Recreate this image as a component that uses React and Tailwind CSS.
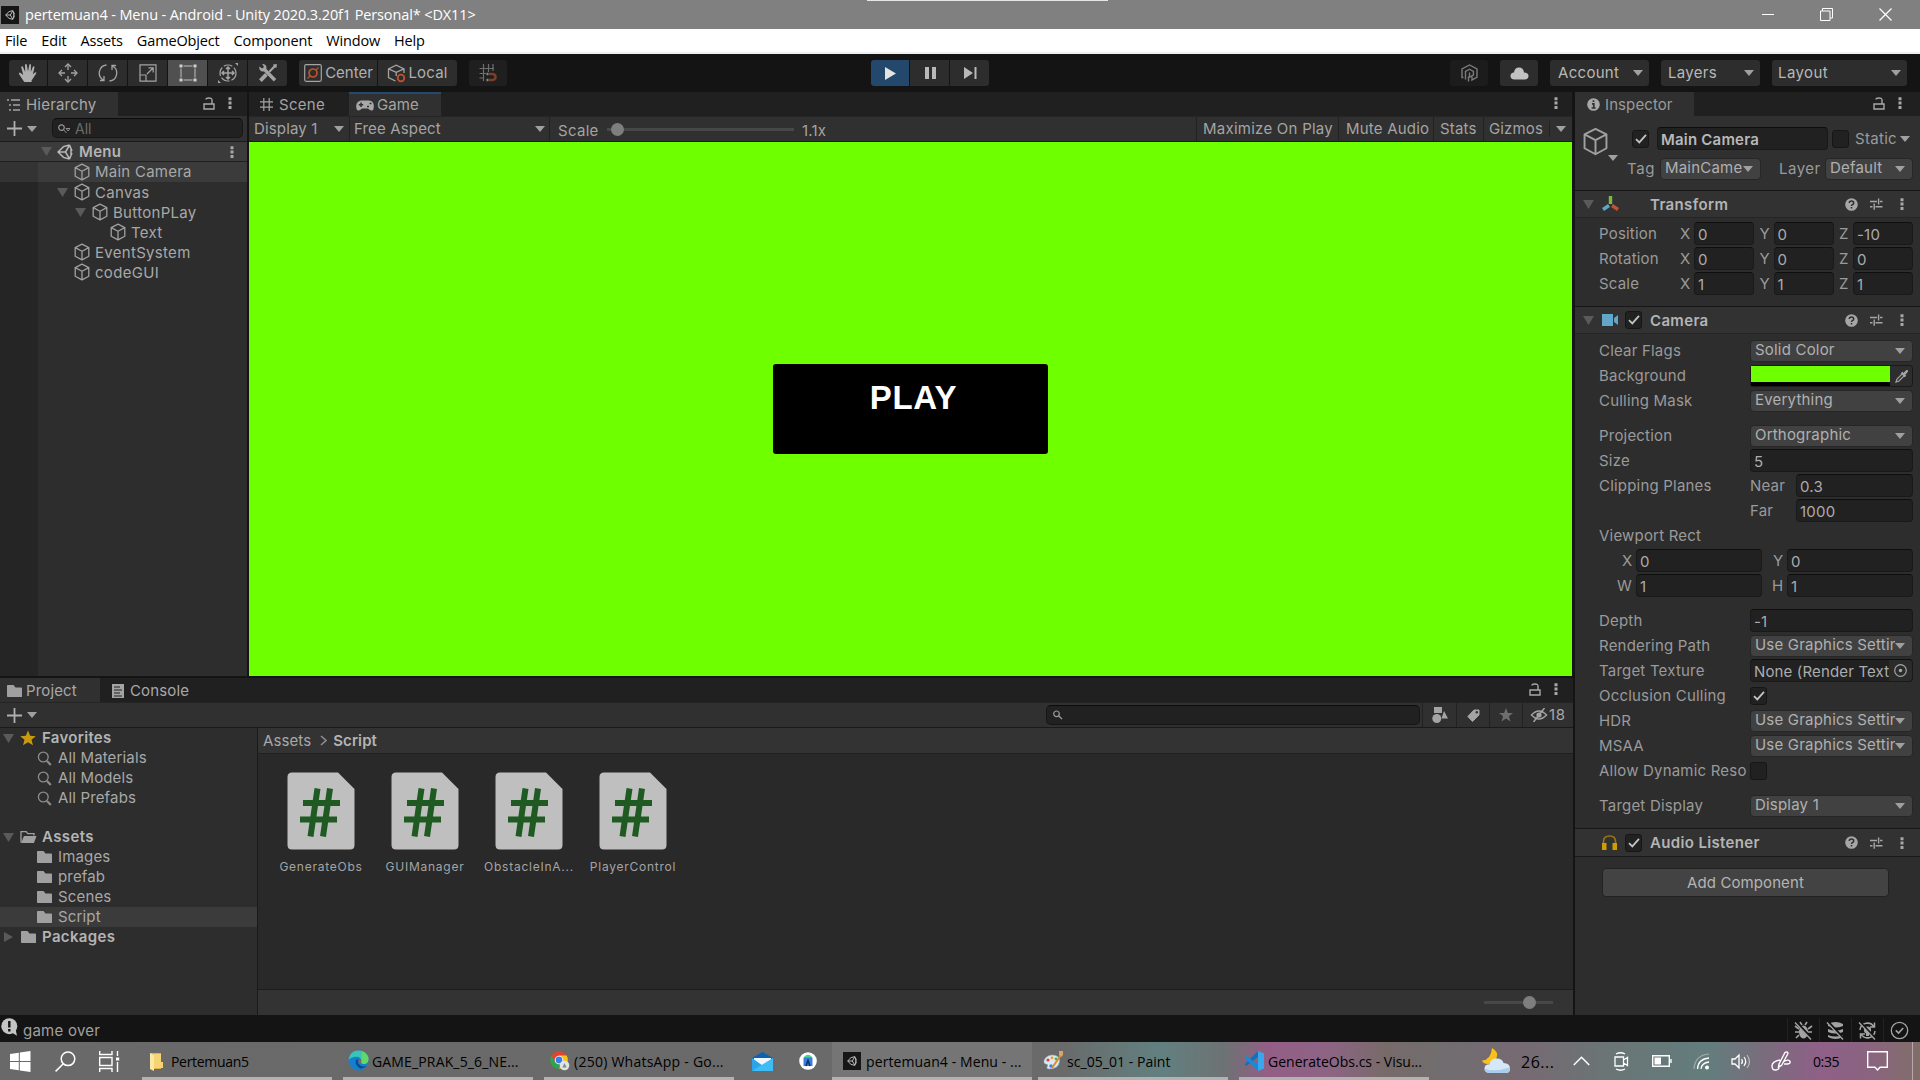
import React from "react";

const UI = "font-['Inter',sans-serif]";
const WIN = "font-['Open_Sans','Noto_Sans',sans-serif]";

/* ---------- small glyphs ---------- */
const Svg = ({ w = 16, h, vb, className = "", children }) => (
  <svg width={w} height={h || w} viewBox={vb || `0 0 ${w} ${h || w}`} fill="none" className={`block shrink-0 ${className}`}>
    {children}
  </svg>
);
const Down = ({ className = "", c = "#a0a0a0" }) => (
  <Svg w={10} h={6} className={className}><path d="M0 0H10L5 6Z" fill={c} /></Svg>
);
const Fold = ({ className = "" }) => (
  <Svg w={11} h={9} className={className}><path d="M0 0H11L5.5 9Z" fill="#5a5a5a" /></Svg>
);
const Dots = ({ className = "" }) => (
  <Svg w={4} h={12} className={className}>
    <path d="M.5.2h3v3h-3zM.5 4.6h3v3h-3zM.5 9h3v3h-3z" fill="#a8a8a8" />
  </Svg>
);
const Lock = ({ className = "" }) => (
  <Svg w={12} h={13} className={className}>
    <path d="M1 7h10v5H1zM9 7V3q0-2-3-2T3 2.5" stroke="#a8a8a8" strokeWidth="1.4" />
  </Svg>
);
const Cube = ({ s = 18, sw = 1.3, className = "", c = "#a0a0a0" }) => (
  <Svg w={s} vb="0 0 18 18" className={className}>
    <path d="M9 1.2 15.8 4.6V13.2L9 16.9 2.2 13.2V4.6ZM2.2 4.6 9 8.2 15.8 4.6M9 8.2V16.9" stroke={c} strokeWidth={sw} strokeLinejoin="round" />
  </Svg>
);
const Plus = () => (
  <Svg w={15} className=""><path d="M7.5 0V15M0 7.5H15" stroke="#b0b0b0" strokeWidth="1.8" /></Svg>
);
const Folder = () => (
  <Svg w={15} h={14}><path d="M0 1.5Q0 1 .8 1H6.5L8.5 3.4H14.2Q15 3.4 15 4.2V12.4Q15 13 14.2 13H.8Q0 13 0 12.2Z" fill="#a0a0a0" /></Svg>
);
const FolderOpen = () => (
  <Svg w={17} h={14}>
    <path d="M1 12.5V1.6H6.2L7.8 3.6H14V5.5" stroke="#a0a0a0" strokeWidth="1.3" />
    <path d="M4 6H16.5L14 13H1Z" fill="#a0a0a0" />
  </Svg>
);
const Mag = () => (
  <Svg w={15}><circle cx="6.3" cy="6" r="4.9" stroke="#8c8c8c" strokeWidth="1.3" /><path d="M10 10 13.8 14" stroke="#8c8c8c" strokeWidth="2.2" /></Svg>
);
const Check = () => (
  <Svg w={12} h={10}><path d="M1 5.2 4.3 8.4 11 .9" stroke="#c4c4c4" strokeWidth="1.8" /></Svg>
);
const UnityMark = ({ s = 16, c = "#b8b8b8" }) => (
  <Svg w={s} vb="0 0 16 16">
    <path d="M12.5 1 6.5 2.6 1 8l5.5 5.4 6 1.6M12.5 1 15 7M12.5 15 15 9M1.2 8H8.5M8.5 8 12.5 1.4M8.5 8 12.5 14.6M14 4v8" stroke={c} strokeWidth="1.5" />
  </Svg>
);
const Help = () => (
  <Svg w={13}>
    <circle cx="6.5" cy="6.5" r="6.3" fill="#a6a6a6" />
    <path d="M4.3 5Q4.3 3 6.5 3T8.7 4.9Q8.7 6 7.4 6.6 6.5 7 6.5 8M6.5 9V10.4" stroke="#2f2f2f" strokeWidth="1.5" />
  </Svg>
);
const Sliders = () => (
  <Svg w={13} h={12}>
    <path d="M0 3.5H7M10 3.5H12.5M8.6 .5V6.5M0 8.8H2.5M5.5 8.8H12.5M4.2 5.5V11.8" stroke="#a6a6a6" strokeWidth="1.4" />
  </Svg>
);
const UnityApp = () => (
  <div className="flex h-[18px] w-[18px] shrink-0 items-center justify-center bg-[#161616]">
    <UnityMark s={10} c="#c8c8c8" />
  </div>
);

/* ---------- building blocks ---------- */
const Field = ({ className = "", children }) => (
  <div className={`flex h-[23px] shrink-0 items-center overflow-hidden whitespace-nowrap rounded-[4px] border border-[#191919] border-t-[#0e0e0e] bg-[#212121] pl-[3px] pt-[2px] text-[#acacac] ${className}`}>
    {children}
  </div>
);
const Select = ({ className = "", children }) => (
  <div className={`flex h-[22px] shrink-0 items-center justify-between overflow-hidden rounded-[4px] border border-[#262626] bg-[#414141] pl-[4px] pr-[7px] text-[#b0b0b0] ${className}`}>
    <span className="min-w-0 flex-1 overflow-hidden whitespace-nowrap pb-[2px]">{children}</span>
    <Down />
  </div>
);
const Box = ({ on, className = "" }) => (
  <div className={`flex h-[18px] w-[17px] shrink-0 items-center justify-center rounded-[3px] border border-[#161616] bg-[#212121] ${className}`}>
    {on && <Check />}
  </div>
);
const Row = ({ label, className = "", children }) => (
  <div className={`flex h-[25px] items-center pl-[24px] ${className}`}>
    <div className="w-[151px] shrink-0 overflow-hidden whitespace-nowrap">{label}</div>
    {children}
  </div>
);
const Axis = ({ label, w = "w-[60px]", lw = "w-[14px]", children }) => (
  <div className="flex items-center">
    <span className={`shrink-0 ${lw}`}>{label}</span>
    <Field className={w}>{children}</Field>
  </div>
);
const Vec = ({ label, v }) => (
  <div className="flex h-[25px] items-center pl-[24px]">
    <div className="w-[81px]">{label}</div>
    <div className="flex gap-[5.5px]">
      <Axis label="X">{v[0]}</Axis>
      <Axis label="Y">{v[1]}</Axis>
      <Axis label="Z">{v[2]}</Axis>
    </div>
  </div>
);
const CompHead = ({ fold, icon, check, title, className = "" }) => (
  <div className={`flex h-[28px] items-center border-y border-t-[#171717] border-b-[#252525] bg-[#323232] ${className}`}>
    <div className="w-[27px] pl-[8px]">{fold && <Fold />}</div>
    <div className="flex w-[23px] items-center">{icon}</div>
    <div className="w-[25px]">{check && <Box on />}</div>
    <div className="flex-1 pt-[1px] font-semibold tracking-[0.35px] text-[#b4b4b4]">{title}</div>
    <Help /><div className="w-[12px]" /><Sliders /><Dots className="ml-[17px] mr-[16px]" />
  </div>
);

/* ---------- window chrome ---------- */
const TitleBar = () => (
  <div className={`flex h-[29px] items-center bg-[#808080] pl-[1px] text-white ${WIN}`}>
    <UnityApp />
    <span className="ml-[6px] w-[842px] whitespace-nowrap text-[14.5px] tracking-[-0.12px]">pertemuan4 - Menu - Android - Unity 2020.3.20f1 Personal* &lt;DX11&gt;</span>
    <div className="mb-[28px] h-[1px] w-[241px] bg-[#e6e6e6]" />
    <div className="ml-auto flex items-center pr-[28px]">
      <div className="mr-[46px] h-[1px] w-[12px] bg-white" />
      <Svg w={13} className="mr-[46px]"><path d="M.5 3H10V12.5H.5ZM2.5 3V.5H12.5V10H10" stroke="#fff" /></Svg>
      <Svg w={13}><path d="M.5 .5 12.5 12.5M12.5 .5 .5 12.5" stroke="#fff" strokeWidth="1.2" /></Svg>
    </div>
  </div>
);
const MenuBar = () => (
  <div className={`flex h-[25px] items-center gap-[14px] border-b-2 border-[#f0f0f0] bg-white pt-[1px] pl-[5px] text-[14.5px] tracking-[-0.15px] text-black ${WIN}`}>
    {["File", "Edit", "Assets", "GameObject", "Component", "Window", "Help"].map((m) => <span key={m}>{m}</span>)}
  </div>
);

const TB = ({ className = "", children }) => (
  <div className={`flex h-[26px] shrink-0 items-center justify-center ${className}`}>{children}</div>
);
const g = "#a4a4a4";
const Toolbar = () => (
  <div className="flex h-[38px] items-center bg-[#141414] pl-[9px] text-[15px] text-[#b0b0b0]">
    <div className="flex gap-[1px]">
      <TB className="w-[38px] rounded-l-[3px] bg-[#2d2d2d]">
        <Svg w={20} h={20}><path d="M5.2 17.5 1 11q-.5-1.5 1-1.6L5.2 12 3.2 4.2q0-1.3 1.5-1L7.2 9 7 1.8Q7.6.2 8.8 1.6L10 8.6 11.4 1.6Q12.6.4 13 2L12.8 9 15 3.6Q16.4 2.8 16.5 4.4L14.8 11.2 17 9.4Q18.8 9 18.2 10.4L13.6 17.4V19H6.4Z" fill="#b0b0b0" /></Svg>
      </TB>
      <TB className="w-[39px] bg-[#2d2d2d]">
        <Svg w={20}><path d="M10 1V7M10 13V19M1 10H7M13 10H19" stroke={g} strokeWidth="1.3" /><path d="M7 4 10 1 13 4M7 16 10 19 13 16M4 7 1 10 4 13M16 7 19 10 16 13" stroke={g} strokeWidth="1.3" /></Svg>
      </TB>
      <TB className="w-[39px] bg-[#2d2d2d]">
        <Svg w={20}><path d="M8.5 2A8 8 0 0 0 5.5 17M11.5 18A8 8 0 0 0 14.5 3M2 17.5H6V13M18 2.5H14V7" stroke={g} strokeWidth="1.3" /></Svg>
      </TB>
      <TB className="w-[39px] bg-[#2d2d2d]">
        <Svg w={18}><path d="M1 .8H17V17.2H1ZM1 11H7V17M8 10 14 4M9.5 3.8H14.2V8.5" stroke={g} strokeWidth="1.2" /></Svg>
      </TB>
      <TB className="w-[39px] bg-[#505050]">
        <Svg w={18}><path d="M4.5 2H13.5M4.5 16H13.5M2 4.5V13.5M16 4.5V13.5" stroke="#c0c0c0" /><path d="M.5.5h3v3h-3zM14.5.5h3v3h-3zM.5 14.5h3v3h-3zM14.5 14.5h3v3h-3z" fill="#d0d0d0" /></Svg>
      </TB>
      <TB className="w-[39px] bg-[#2d2d2d]">
        <Svg w={20}><circle cx="10" cy="10" r="8" stroke={g} strokeWidth="1.2" strokeDasharray="9 2" /><path d="M10 4V16M4 10H16M8 6 10 4 12 6M8 14 10 16 12 14M6 8 4 10 6 12M14 8 16 10 14 12" stroke={g} strokeWidth="1.5" /><path d="M17 0H20V3ZM0 17V20H3Z" fill={g} /></Svg>
      </TB>
      <TB className="w-[39px] rounded-r-[3px] bg-[#2d2d2d]">
        <Svg w={20}>
          <path d="M6 6 17 17.2" stroke={g} strokeWidth="3.4" />
          <path d="M1.2 3.4 4.2 5.6 6 4 4.2 1Q7.4.4 8.4 3.4 8.8 5.6 7.6 7.4 5.6 9 3.4 8.2 1 7 1.2 3.4Z" fill={g} />
          <path d="M2.4 17.6 8.4 11.4" stroke={g} strokeWidth="3.8" />
          <path d="M10.4 8.2 15.6 2.8 15 1.4 18.8 1 18.6 4.8 17 4.4 11.8 9.8Z" fill={g} />
        </Svg>
      </TB>
    </div>
    <div className="ml-[12px] flex gap-[1px]">
      <TB className="w-[78px] gap-[3px] rounded-l-[3px] bg-[#2d2d2d] pl-[1px]">
        <Svg w={18}><rect x=".7" y=".7" width="16.6" height="16.6" rx="1.5" stroke={g} strokeWidth="1.2" /><path d="M3.5 14.5 6 12M12 6 14.5 3.5" stroke="#c0532f" strokeWidth="1.2" /><circle cx="9" cy="9" r="4" stroke="#c0532f" strokeWidth="1.7" /></Svg>
        Center
      </TB>
      <TB className="w-[79px] gap-[2px] rounded-r-[3px] bg-[#2d2d2d] tracking-[0.2px]">
        <Svg w={19} h={19}><path d="M8.5 17 1.5 13.5V4.8L9.2 1.2 17 4.8V9M1.5 4.8 9.2 8.4 17 4.8M9.2 8.4V12" stroke={g} strokeWidth="1.3" /><circle cx="14" cy="14" r="3.3" stroke="#c0532f" strokeWidth="1.8" /></Svg>
        Local
      </TB>
    </div>
    <TB className="ml-[12px] w-[38px] rounded-[3px] bg-[#1f1f1f]">
      <Svg w={18} h={18}><path d="M4.5 0V17M9.5 0V8M14 0V7M.5 4.5H15M.5 9.5H7M.5 14H5" stroke="#6e6e6e" strokeWidth="1.2" /><path d="M10 10H13.5Q16.5 10.4 16.5 13T13.5 16H10" stroke="#7d3d28" strokeWidth="2.6" /><path d="M7.5 10h2M7.5 16h2" stroke="#888" strokeWidth="2.4" /></Svg>
    </TB>
    <div className="ml-[364px] flex gap-[1px]">
      <TB className="w-[38px] rounded-l-[3px] bg-[#24486b]"><Svg w={11} h={13}><path d="M0 0 11 6.5 0 13Z" fill="#e4e4e4" /></Svg></TB>
      <TB className="w-[39px] bg-[#2d2d2d] pl-[1px]"><Svg w={11} h={12}><path d="M0 0h4v12H0zM7 0h4v12H7z" fill="#b8b8b8" /></Svg></TB>
      <TB className="w-[39px] rounded-r-[3px] bg-[#2d2d2d] pl-[1px]"><Svg w={13} h={12}><path d="M0 0 9 6 0 12ZM10.5 0h2v12h-2z" fill="#b8b8b8" /></Svg></TB>
    </div>
    <div className="ml-auto flex gap-[12px] pr-[13px] text-[#b8b8b8]">
      <TB className="w-[38px] rounded-[3px] bg-[#1c1c1c]">
        <Svg w={17} h={18}><path d="M2.5 13.5H1V5L8.5 1 16 5V13L11 16V12.8M4.5 15.5V7.5L8.5 5.2 12.4 7.5V11L8.5 13V8.5M7.5 17.5V12.5" stroke="#7c7c7c" strokeWidth="1.4" /></Svg>
      </TB>
      <TB className="w-[38px] rounded-[3px] bg-[#2d2d2d] pl-[1px]">
        <Svg w={19} h={13}><path d="M4.5 12.5Q.5 12.2.5 9T4 5.6Q4.6.5 9 .5T14 5.5Q18.5 5.6 18.5 9T14.5 12.5Z" fill="#c2c2c2" /></Svg>
      </TB>
      <TB className="w-[99px] rounded-[3px] bg-[#2d2d2d] !justify-between pl-[8px] pr-[6px]"><span className="tracking-[0.3px]">Account</span><Down /></TB>
      <TB className="w-[99px] rounded-[3px] bg-[#2d2d2d] !justify-between pl-[7px] pr-[6px]"><span className="tracking-[0.3px]">Layers</span><Down /></TB>
      <TB className="w-[135px] rounded-[3px] bg-[#2d2d2d] !justify-between pl-[6px] pr-[6px]"><span className="tracking-[0.4px]">Layout</span><Down /></TB>
    </div>
  </div>
);

/* ---------- hierarchy ---------- */
const Node = ({ pad, fold, name }) => (
  <div className="flex h-[20px]">
    <div className="w-[38px] shrink-0 bg-[#252525]" />
    <div className={`flex items-center ${pad}`}>
      <div className="w-[17px] pl-[1px]">{fold && <Fold />}</div>
      <Cube /><span className="ml-[4px] pt-[1px]">{name}</span>
    </div>
  </div>
);
const Hierarchy = () => (
  <div className="flex w-[247px] shrink-0 flex-col bg-[#2d2d2d] text-[#a8a8a8]">
    <div className="flex h-[24px] bg-[#202020]">
      <div className="flex w-[118px] items-center bg-[#303030] pl-[7px] pt-[1px]">
        <Svg w={13} h={12}><path d="M0 1h2M4 1h9M2 6h2M6 6h7M2 11h2M6 11h7" stroke={g} strokeWidth="1.5" /></Svg>
        <span className="ml-[6px] tracking-[0.2px]">Hierarchy</span>
      </div>
      <Lock className="ml-[85px] mt-[5px]" /><Dots className="ml-[13px] mt-[5px]" />
    </div>
    <div className="flex h-[26px] items-center border-b border-[#1a1a1a] bg-[#303030] pl-[7px]">
      <Plus /><Down className="ml-[5px]" />
      <div className="ml-[15px] mb-[1px] flex h-[20px] w-[191px] items-center rounded-[5px] border border-[#161616] border-t-[#0c0c0c] bg-[#212121] pl-[5px] pt-[1px] text-[14px] text-[#6c6c6c]">
        <Svg w={12} h={10}><circle cx="3.5" cy="3.6" r="2.8" stroke="#9a9a9a" strokeWidth="1.2" /><path d="M5.5 5.6 8.5 9M8 4.5h4l-2 2.5z" stroke="#9a9a9a" strokeWidth=".9" /></Svg>
        <span className="ml-[5px]">All</span>
      </div>
    </div>
    <div className="flex h-[20px] items-center border-b border-[#202020] bg-[#3b3b3b] pl-[41px]">
      <Fold /><div className="w-[5px]" /><UnityMark />
      <span className="ml-[6px] flex-1 font-semibold tracking-[0.3px] text-[#b4b4b4]">Menu</span>
      <Dots className="mr-[13px]" />
    </div>
    <div className="flex h-[20px] items-center bg-[#3b3b3b]">
      <div className="h-full w-[38px] bg-[#333333]" />
      <Cube className="ml-[35px]" /><span className="ml-[4px] tracking-[0.25px]">Main Camera</span>
    </div>
    <div className="tracking-[0.3px]">
      <Node pad="pl-[18px]" fold name="Canvas" />
      <Node pad="pl-[36px]" fold name="ButtonPLay" />
      <Node pad="pl-[54px]" name="Text" />
      <Node pad="pl-[18px]" name="EventSystem" />
      <Node pad="pl-[18px]" name="codeGUI" />
    </div>
    <div className="w-[38px] flex-1 bg-[#252525]" />
  </div>
);

/* ---------- game view ---------- */
const Sep = ({ className = "" }) => <div className={`h-full w-[1px] shrink-0 bg-[#222] ${className}`} />;
const GameView = () => (
  <div className="ml-[2px] flex w-[1323px] shrink-0 flex-col bg-[#202020] text-[#a4a4a4]">
    <div className="flex h-[24px]">
      <div className="flex w-[100px] items-center pl-[11px] pt-[1px]">
        <Svg w={13}><path d="M3.8 0V13M9.2 0V13M0 3.8H13M0 9.2H13" stroke={g} strokeWidth="1.2" /></Svg>
        <span className="ml-[6px] tracking-[0.3px]">Scene</span>
      </div>
      <div className="flex w-[92px] items-center border-t-2 border-[#264a6c] bg-[#303030] pl-[7px]">
        <Svg w={18} h={11}><path d="M5 .5H13Q17.8.8 17.8 6T15.5 10.5Q14 10.5 12 8.5H6Q4 10.5 2.5 10.5 .2 10.5.2 6T5 .5Z" fill="#a8a8a8" /><path d="M5 2.5V7M2.8 4.8H7.2M11 6.5h2M13.5 3.6h2" stroke="#303030" strokeWidth="1.5" /></Svg>
        <span className="ml-[3px] tracking-[0.1px]">Game</span>
      </div>
      <Dots className="ml-auto mr-[14px] mt-[5px]" />
    </div>
    <div className="flex h-[26px] items-center border-b border-t border-b-[#1a1a1a] border-t-[#262626] bg-[#303030] tracking-[0.15px]">
      <div className="flex w-[100px] items-center justify-between pl-[5px] pr-[5px]">Display 1<Down /></div><Sep />
      <div className="flex w-[199px] items-center justify-between pl-[4px] pr-[4px]">Free Aspect<Down /></div><Sep />
      <span className="ml-[8px] mt-[3px] w-[49px] tracking-[0.3px]">Scale</span>
      <div className="mt-[1px] flex h-[3px] w-[187px] items-center bg-[#484848]"><div className="ml-[4px] h-[13px] w-[13px] rounded-full bg-[#7e7e7e]" /></div>
      <span className="ml-[8px] mt-[3px]">1.1x</span>
      <div className="ml-auto flex h-full items-center">
        <Sep /><span className="w-[141px] pl-[6px] tracking-[0.25px]">Maximize On Play</span>
        <Sep /><span className="w-[94px] pl-[7px] tracking-[0.2px]">Mute Audio</span>
        <Sep /><span className="w-[49px] pl-[6px]">Stats</span>
        <Sep /><span className="w-[65px] pl-[5px]">Gizmos</span>
        <div className="h-[16px] w-[1px] bg-[#222]" /><Down className="ml-[6px] mr-[6px]" />
      </div>
    </div>
    <div className="flex flex-1 bg-[#6eff00]">
      <div className="ml-[524px] mt-[222px] flex h-[90px] w-[275px] justify-center rounded-[3px] bg-black pl-[6px] pt-[15px] font-['Liberation_Sans',sans-serif] text-[33px] font-bold leading-[37px] tracking-[0.6px] text-white">PLAY</div>
    </div>
  </div>
);

/* ---------- project ---------- */
const TreeRow = ({ icon, name, sel }) => (
  <div className={`flex h-[20px] items-center pl-[37px] tracking-[0.15px] ${sel ? "bg-[#3b3b3b]" : ""}`}>{icon}<span className="ml-[6px]">{name}</span></div>
);
const FileCard = ({ name }) => (
  <div className="flex w-[104px] flex-col items-center">
    <Svg w={68} h={78}>
      <path d="M5 .5H51L67.5 17V73Q67.5 77.5 63 77.5H5Q.5 77.5.5 73V5Q.5.5 5 .5Z" fill="#bfbfbf" />
      <path d="M30.5 16.5 23.5 64.5M43 16.5 36 64.5M16 31H53M13 47.5H50" stroke="#1f5a22" strokeWidth="6" />
    </Svg>
    <span className="mt-[9px] text-[12px] leading-[15px] tracking-[0.75px] text-[#a4a4a4]">{name}</span>
  </div>
);
const Project = () => (
  <div className="flex h-[337px] flex-col bg-[#2d2d2d] text-[#a8a8a8]">
    <div className="flex h-[24px] bg-[#202020] tracking-[0.15px]">
      <div className="flex w-[100px] items-center bg-[#303030] pl-[7px] pt-[1px]"><Folder /><span className="ml-[4px]">Project</span></div>
      <div className="flex items-center pl-[12px] pt-[1px]">
        <Svg w={12} h={14}><path d="M0 0h12v14H0z" fill={g} /><path d="M2 3h6M2 6h8M2 9h6M2 12h8" stroke="#202020" strokeWidth="1.2" /></Svg>
        <span className="ml-[6px]">Console</span>
      </div>
      <Lock className="ml-auto mt-[5px]" /><Dots className="ml-[13px] mr-[15px] mt-[5px]" />
    </div>
    <div className="flex h-[26px] items-center border-b border-t border-b-[#1a1a1a] border-t-[#242424] bg-[#303030] pl-[7px]">
      <Plus /><Down className="ml-[5px]" />
      <div className="ml-auto mb-[1px] flex h-[20px] w-[374px] items-center rounded-[5px] border border-[#161616] border-t-[#0c0c0c] bg-[#212121] pl-[6px]">
        <Svg w={10}><circle cx="3.5" cy="3.8" r="2.8" stroke="#9a9a9a" strokeWidth="1.2" /><path d="M5.5 5.8 9 9" stroke="#9a9a9a" strokeWidth="1.4" /></Svg>
      </div>
      <Sep className="ml-[2px]" />
      <div className="flex w-[33px] justify-center"><Svg w={16} h={17}><path d="M2 0h8v6H2z" fill={g} /><circle cx="4.8" cy="11.5" r="4.5" fill={g} /><path d="M12 4 16 11.5H9.5Z" fill={g} /></Svg></div>
      <Sep />
      <div className="flex w-[32px] justify-center"><Svg w={13}><path d="M7 1H12V6L5.5 12.5 .8 7.5Z" fill={g} stroke={g} strokeLinejoin="round" /><circle cx="9.8" cy="3.3" r="1.2" fill="#303030" /></Svg></div>
      <Sep />
      <div className="flex w-[32px] justify-center"><Svg w={14}><path d="M7 0 8.9 5H14L9.9 8.2 11.5 13.6 7 10.4 2.5 13.6 4.1 8.2 0 5H5.1Z" fill="#6e6e6e" /></Svg></div>
      <Sep />
      <div className="flex w-[50px] items-center pl-[7px]">
        <Svg w={18} h={14} vb="0 0 17 14"><path d="M1 7Q8.5-1 16 7 8.5 15 1 7ZM14 0 3 14" stroke={g} strokeWidth="1.5" /><circle cx="8.5" cy="7" r="2.6" fill={g} /></Svg>
        <span className="ml-[1px] tracking-[0.6px]">18</span>
      </div>
    </div>
    <div className="flex flex-1">
      <div className="w-[257px] shrink-0">
        <div className="flex h-[20px] items-center pl-[3px]"><Fold /><Svg w={16} className="ml-[6px]"><path d="M8 .5 10.2 5.8 15.8 6.2 11.5 9.8 13 15.3 8 12.2 3 15.3 4.5 9.8.2 6.2 5.8 5.8Z" fill="#c99a10" /></Svg><span className="ml-[6px] font-semibold tracking-[0.3px] text-[#b4b4b4]">Favorites</span></div>
        <TreeRow icon={<Mag />} name="All Materials" />
        <TreeRow icon={<Mag />} name="All Models" />
        <TreeRow icon={<Mag />} name="All Prefabs" />
        <div className="mt-[19px] flex h-[20px] items-center pl-[3px]"><Fold /><div className="w-[6px]" /><FolderOpen /><span className="ml-[5px] font-semibold tracking-[0.4px] text-[#b4b4b4]">Assets</span></div>
        <TreeRow icon={<Folder />} name="Images" />
        <TreeRow icon={<Folder />} name="prefab" />
        <TreeRow icon={<Folder />} name="Scenes" />
        <TreeRow icon={<Folder />} name="Script" sel />
        <div className="flex h-[20px] items-center pl-[4px]"><Svg w={9} h={10}><path d="M0 0 9 5 0 10Z" fill="#5a5a5a" /></Svg><div className="w-[8px]" /><Folder /><span className="ml-[6px] font-semibold tracking-[0.35px] text-[#b4b4b4]">Packages</span></div>
      </div>
      <div className="flex flex-1 flex-col border-l border-[#1a1a1a] bg-[#292929]">
        <div className="flex h-[26px] items-center border-b border-[#202020] bg-[#333] pl-[5px] tracking-[0.1px]">
          <span>Assets</span>
          <Svg w={7} h={11} className="ml-[9px] mr-[6px]"><path d="M1 1 6 5.5 1 10" stroke="#8c8c8c" strokeWidth="1.6" /></Svg>
          <span className="font-semibold text-[#b4b4b4]">Script</span>
        </div>
        <div className="flex flex-1 pl-[11px] pt-[18px]">
          {["GenerateObs", "GUIManager", "ObstacleInA...", "PlayerControl"].map((n) => <FileCard key={n} name={n} />)}
        </div>
        <div className="flex h-[26px] items-center justify-end border-t border-[#1d1d1d] bg-[#333] pr-[20px]">
          <div className="flex h-[3px] w-[69px] items-center bg-[#484848]"><div className="ml-[39px] h-[13px] w-[13px] rounded-full bg-[#7e7e7e]" /></div>
        </div>
      </div>
    </div>
  </div>
);

/* ---------- inspector ---------- */
const Inspector = () => (
  <div className="ml-auto flex w-[345px] shrink-0 flex-col bg-[#2d2d2d] tracking-[0.2px] text-[#9a9a9a]">
    <div className="flex h-[24px] bg-[#202020]">
      <div className="flex w-[119px] items-center bg-[#303030] pl-[12px] pt-[1px]">
        <Svg w={13}><circle cx="6.5" cy="6.5" r="6.3" fill="#a8a8a8" /><path d="M6.5 2.2V4M5 5.8H6.8V9.6M4.6 10H8.6" stroke="#303030" strokeWidth="1.7" /></Svg>
        <span className="ml-[5px] tracking-[0.1px]">Inspector</span>
      </div>
      <Lock className="ml-[179px] mt-[5px]" /><Dots className="ml-[13px] mt-[5px]" />
    </div>
    <div className="flex h-[74px] bg-[#303030]">
      <div className="flex w-[57px] pl-[6px] pt-[11px]">
        <Cube s={29} sw={1.2} /><Down className="-ml-[2px] mt-[28px]" />
      </div>
      <div className="flex-1 pt-[11px]">
        <div className="flex h-[23px] items-center">
          <Box on /><Field className="ml-[8px] mr-[4px] w-[171px] font-semibold !text-[#b8b8b8]">Main Camera</Field>
          <Box /><span className="ml-[6px] mr-[3px] w-[42px] tracking-[0.3px]">Static</span><Down />
        </div>
        <div className="mt-[7px] flex h-[24px] items-center">
          <span className="-ml-[5px] w-[33px] tracking-[0.6px]">Tag</span>
          <Select className="w-[101px]">MainCame</Select>
          <span className="ml-[18px] w-[46px] tracking-[0.5px]">Layer</span>
          <Select className="w-[88px]">Default</Select>
        </div>
      </div>
    </div>
    <CompHead fold title="Transform" icon={
      <Svg w={17} h={16}><path d="M8.5 0V8" stroke="#7fb83a" strokeWidth="3.4" /><path d="M7 9.5 1 13.5" stroke="#5fa5c8" strokeWidth="3.4" /><path d="M10 9.5 16 13.5" stroke="#c0532f" strokeWidth="3.4" /></Svg>} />
    <div className="pt-[3px]">
      <Vec label="Position" v={["0", "0", "-10"]} />
      <Vec label="Rotation" v={["0", "0", "0"]} />
      <Vec label="Scale" v={["1", "1", "1"]} />
    </div>
    <CompHead className="mt-[10px]" fold check title="Camera" icon={
      <Svg w={17} h={12}><path d="M0 0h11v12H0zM12 4 16 1V11L12 8Z" fill="#62a6c9" /></Svg>} />
    <div className="pt-[4px]">
      <Row label="Clear Flags"><Select className="w-[163px]">Solid Color</Select></Row>
      <Row label="Background">
        <div className="flex h-[22px] w-[163px] items-center rounded-[3px] border border-[#191919]">
          <div className="h-[20px] w-[139px] border-b-4 border-black bg-[#6eff00]" />
          <Svg w={14} className="ml-[5px]"><path d="M1 13 2 10 7.5 4.5 9.5 6.5 4 12Z" stroke={g} strokeWidth="1.2" /><path d="M6.5 3.5 10.5 7.5M8.5 5.5 12 2" stroke={g} strokeWidth="2.4" /><path d="M9 4.5 11.5 1Q13.5.5 13 2.6L10 6Z" fill={g} /></Svg>
        </div>
      </Row>
      <Row label="Culling Mask"><Select className="w-[163px]">Everything</Select></Row>
      <Row label="Projection" className="mt-[10px]"><Select className="w-[163px]">Orthographic</Select></Row>
      <Row label="Size"><Field className="w-[163px]">5</Field></Row>
      <Row label="Clipping Planes"><Axis label="Near" lw="w-[46px]" w="w-[117px]">0.3</Axis></Row>
      <Row label=""><Axis label="Far" lw="w-[46px]" w="w-[117px]">1000</Axis></Row>
      <Row label="Viewport Rect" />
      <div className="flex h-[25px] items-center pl-[47px]"><Axis label="X" w="w-[126px]">0</Axis><div className="w-[11px]" /><Axis label="Y" w="w-[126px]">0</Axis></div>
      <div className="flex h-[25px] items-center pl-[42px]"><Axis label="W" lw="w-[19px]" w="w-[126px]">1</Axis><div className="w-[10px]" /><Axis label="H" lw="w-[15px]" w="w-[126px]">1</Axis></div>
      <Row label="Depth" className="mt-[10px]"><Field className="w-[163px]">-1</Field></Row>
      <Row label="Rendering Path"><Select className="w-[163px]">Use Graphics Settings</Select></Row>
      <Row label="Target Texture">
        <Field className="w-[163px]">
          <span className="w-[135px] shrink-0 overflow-hidden tracking-[0.15px]">None (Render Texture)</span>
          <span className="flex h-[21px] w-[24px] items-center justify-center rounded-r-[3px] bg-[#2b2b2b] -mt-[2px]"><Svg w={13}><circle cx="6.5" cy="6.5" r="5.8" stroke={g} strokeWidth="1.2" /><circle cx="6.5" cy="6.5" r="1.8" fill={g} /></Svg></span>
        </Field>
      </Row>
      <Row label="Occlusion Culling"><Box on /></Row>
      <Row label="HDR"><Select className="w-[163px]">Use Graphics Settings</Select></Row>
      <Row label="MSAA"><Select className="w-[163px]">Use Graphics Settings</Select></Row>
      <Row label="Allow Dynamic Reso"><Box /></Row>
      <Row label="Target Display" className="mt-[10px]"><Select className="w-[163px]">Display 1</Select></Row>
    </div>
    <CompHead className="mt-[10px] !h-[29px] !border-b-[#191919]" check title="Audio Listener" icon={
      <Svg w={15} h={15}><path d="M1.5 9V6.5Q1.5 1 7.5 1T13.5 6.5V9" stroke="#9a7410" strokeWidth="1.6" /><path d="M0 8h4.5v7H0zM10.5 8H15v7H10.5z" fill="#cf9d00" /></Svg>} />
    <div className="flex justify-center pr-[4px] pt-[11px]">
      <div className="flex h-[29px] w-[287px] items-center justify-center rounded-[4px] border border-[#222] bg-[#434343] tracking-[0.1px] text-[#b4b4b4]">Add Component</div>
    </div>
  </div>
);

/* ---------- status bar + taskbar ---------- */
const Slash = ({ children }) => (
  <div className="flex h-[24px] w-[32px] items-center justify-center border-l border-[#222]">
    <Svg w={19}>{children}</Svg>
  </div>
);
const StatusBar = () => (
  <div className="flex h-[27px] shrink-0 items-center bg-[#141414] pl-[1px] text-[#a0a0a0]">
    <Svg w={17} h={18} className="-mt-[3px]"><circle cx="8.3" cy="8.2" r="8" fill="#c4c4c4" /><path d="M10 14 16 17.8 14.5 11Z" fill="#c4c4c4" /><path d="M8.3 3V9.5M8.3 11V13.4" stroke="#141414" strokeWidth="2.4" /></Svg>
    <span className="ml-[5px] mt-[4px] tracking-[0.25px]">game over</span>
    <div className="ml-auto flex pr-[5px] pt-[3px]">
      <Slash><ellipse cx="9.5" cy="11" rx="4.5" ry="6.5" fill={g} /><path d="M1 5 5 8M1 11H18M2 17 5 14M18 5 14 8M17 17 14 14M6 1 8 4M13 1 11 4" stroke={g} strokeWidth="1.6" /><path d="M2 1 18 18" stroke="#141414" strokeWidth="2.6" /><path d="M1 1.5 17 18.5" stroke={g} strokeWidth="1.3" /></Slash>
      <Slash><path d="M2 3Q9.5-1 17 3V5Q9.5 8 2 5ZM2 8Q9.5 11 17 8V11Q9.5 14 2 11ZM2 14Q9.5 17 17 14V16Q9.5 20 2 16Z" fill={g} /><path d="M2 1 18 18" stroke="#141414" strokeWidth="2.6" /><path d="M1 1.5 17 18.5" stroke={g} strokeWidth="1.3" /></Slash>
      <Slash><path d="M2 9A7.5 7.5 0 0 1 16 6M17 10A7.5 7.5 0 0 1 3 13M16.5 1.5V6H12M2.5 17.5V13H7" stroke={g} strokeWidth="1.5" /><circle cx="9.5" cy="9" r="3.6" fill={g} /><path d="M8 12h3v3H8z" fill={g} /><path d="M2 1 18 18" stroke="#141414" strokeWidth="2.4" /><path d="M1 1.5 17 18.5" stroke={g} strokeWidth="1.3" /></Slash>
      <Slash><circle cx="9.5" cy="9.5" r="8.2" stroke={g} strokeWidth="1.3" /><path d="M5.8 9.3 8.6 12 13.2 7" stroke={g} strokeWidth="1.6" /></Slash>
    </div>
  </div>
);
const Task = ({ icon, children, className = "", gap = "ml-[5px]" }) => (
  <div className={`flex h-[38px] shrink-0 items-center border-b-[3px] border-[#b2b2b2] pt-[2px] ${className}`}>
    {icon}<span className={`whitespace-nowrap pt-[2px] ${gap}`}>{children}</span>
  </div>
);
const Edge = () => (
  <Svg w={21}>
    <circle cx="10.5" cy="10.5" r="10" fill="#1380cf" />
    <path d="M.6 10Q1.6.5 10.5.5T20.5 9Q20.5 14 15.5 14 12 13.6 13.4 10.8 12.6 6.6 8.2 6.8 3 7 .6 10Z" fill="#38c4b8" />
    <path d="M14 1.2Q20.5 3.6 20.5 9 20.4 14 15.5 14 12 13.6 13.4 10.8Z" fill="#62d76a" />
    <path d="M8.4 9.2Q5.6 14.6 12 18.4 16.2 18.8 18.6 16 12.8 17.4 10.4 13.6 9.4 11 10.8 9.4Z" fill="#0c4a94" />
    <path d="M10.6 9.6Q13.6 8.8 13.4 10.9 12.4 12.8 14 13.9 10.6 14 10 11.6Z" fill="#6e6e6e" />
  </Svg>
);
const Chrome = () => (
  <Svg w={20} h={21}>
    <circle cx="9" cy="10" r="8.8" fill="#2da44e" /><path d="M1.4 5.6A8.8 8.8 0 0 1 16.6 5.6H9Z" fill="#e2412e" /><path d="M1.4 5.6 5.4 12 9 5.6Z" fill="#e2412e" />
    <path d="M16.6 5.6A8.8 8.8 0 0 1 9 18.8L13 10.5 9 5.6Z" fill="#fbc116" /><circle cx="9" cy="10" r="4.3" fill="#fff" /><circle cx="9" cy="10" r="3.4" fill="#3b7ded" />
    <circle cx="14.5" cy="15.5" r="4.8" fill="#dfe3e6" /><path d="M12.4 17.6 14.5 13 16.6 17.6Z" fill="#7f8a92" />
  </Svg>
);
const Taskbar = () => (
  <div className={`flex h-[38px] shrink-0 items-center overflow-hidden bg-[linear-gradient(90deg,#696969_0px,#6a6a6a_1060px,#628080_1160px,#6d7273_1225px,#935e86_1268px,#8d6484_1330px,#776b69_1385px,#706d70_1450px,#776a72_1520px,#6a7575_1610px,#637d7d_1710px,#7a6c7c_1765px,#8f6088_1820px,#8a6480_1870px,#806e68_1920px)] text-[14px] text-black ${WIN}`}>
    <Svg w={21} className="ml-[10px]"><path d="M0 3 8.8 1.7V10H0ZM9.8 1.5 20.5 0V10H9.8ZM0 11H8.8V19.3L0 18ZM9.8 11H20.5V21L9.8 19.5Z" fill="#fff" /></Svg>
    <Svg w={21} className="ml-[24px]"><circle cx="13" cy="7.8" r="6.8" stroke="#fff" strokeWidth="1.5" /><path d="M8.3 12.8.6 20.4" stroke="#fff" strokeWidth="1.5" /></Svg>
    <Svg w={21} className="ml-[23px]"><path d="M.7 0V3.5H13V0M.7 6.5H13V14.5H.7ZM.7 21V17.5H13V21M18.5 0V5M18.5 11V21" stroke="#fff" strokeWidth="1.4" /><path d="M17 6.5h3.2v3H17z" fill="#fff" /></Svg>
    <Task className="ml-[22px] w-[190px] pl-[7px] tracking-[-0.3px]" gap="ml-[7px]" icon={<Svg w={15} h={20}><path d="M1 2H12V18H1Z" fill="#e3b04b" /><path d="M1 2 5 4V20L1 18Z" fill="#fbe8a4" /><path d="M5 3H12V11H14V17H5Z" fill="#f6d473" /></Svg>}>Pertemuan5</Task>
    <Task className="ml-[11px] w-[190px] pl-[5px] tracking-[0.15px]" gap="ml-[3px]" icon={<Edge />}>GAME_PRAK_5_6_NE...</Task>
    <Task className="ml-[11px] w-[190px] pl-[6px] tracking-[0.25px]" gap="ml-[4px]" icon={<Chrome />}>(250) WhatsApp - Go...</Task>
    <Svg w={21} h={19} className="ml-[18px]"><path d="M0 6 10.5 0 21 6V12H0Z" fill="#0b62b5" /><path d="M2 6H19V14H2Z" fill="#f2f6fa" /><path d="M0 6 10.5 13.5 21 6V19H0Z" fill="#2aa5ea" /><path d="M0 19 21 6V19Z" fill="#3dbcf5" /></Svg>
    <Svg w={18} className="ml-[26px]"><circle cx="9" cy="9" r="8.8" fill="#fff" /><path d="M5 5Q9 .5 13 5V7H5Z" fill="#3ddc84" /><path d="M4.5 5.5H13.5V14H4.5Z" fill="#3a7de0" /><path d="M7 14 9 8.5 11 14" stroke="#12305f" strokeWidth="1.5" /></Svg>
    <Task className="ml-[15px] w-[200px] bg-[#757575] pl-[11px] tracking-[0.1px]" icon={<UnityApp />}>pertemuan4 - Menu - ...</Task>
    <Task className="ml-[6px] w-[190px] pl-[5px] tracking-[0.05px]" gap="ml-[3px]" icon={<Svg w={21} h={20}><path d="M9 4Q17 4 16.5 10.5 15.5 18 6 18 2.5 17.5 4.5 15 5.5 13 2.5 13 .5 12 1 9.5 3 4.5 9 4Z" fill="#dce9f2" stroke="#8fb0c8" strokeWidth=".6" /><circle cx="5" cy="9" r="1.6" fill="#e2412e" /><circle cx="9" cy="6.8" r="1.5" fill="#e8a52a" /><circle cx="13" cy="8" r="1.4" fill="#4fb14e" /><circle cx="8" cy="15" r="1.7" fill="#3b7ded" /><path d="M9 17 18 4" stroke="#d98b2b" strokeWidth="2" /><path d="M16 4 16 0 20 0 20 4 18 6Z" fill="#d9a566" /></Svg>}>sc_05_01 - Paint</Task>
    <Task className="ml-[11px] w-[190px] pl-[5px] tracking-[0px]" gap="ml-[4px]" icon={<Svg w={20} h={20}><path d="M14 0 20 2.5V17.5L14 20 14 5.5Z" fill="#3aa6ee" /><path d="M14 0V6L2.5 15 .5 13.2Z" fill="#1272b8" /><path d="M14 20V14L2.5 5 .5 6.8Z" fill="#1b8ad6" /></Svg>}>GenerateObs.cs - Visu...</Task>
    <Svg w={29} h={26} className="ml-[53px]"><path d="M10 0Q17 4 14.5 10T5 16Q1 15.5 0 12.5 9 12 10 0Z" fill="#fbc116" /><path d="M8 25Q2.5 25 2.5 20.6T7.5 16.2Q8.5 10.5 14.5 10.5T21.5 15Q28 15.5 28 20.4T23.5 25Z" fill="#d5e8f7" /><path d="M8 25Q2.5 25 2.5 21 14 24 27.8 19.5 28 25 23.5 25Z" fill="#a9cdec" /></Svg>
    <span className="ml-[10px] w-[52px] pt-[2px] text-[16px] tracking-[0.5px]">26...</span>
    <Svg w={17} h={10} className="mr-[23px]"><path d="M.8 9 8.5 1.2 16.2 9" stroke="#fff" strokeWidth="1.5" /></Svg>
    <Svg w={16} h={19} className="mr-[23px]"><path d="M2 5H10.5V14H2ZM10.5 8 14.5 5.5V13.5L10.5 11M3 2Q7.5-.5 12 2M3 17Q7.5 19.5 12 17" stroke="#fff" strokeWidth="1.3" /></Svg>
    <Svg w={20} h={12} className="mr-[21px]"><path d="M.7.7H17.3V11.3H.7ZM19 4V8" stroke="#fff" strokeWidth="1.4" /><path d="M2.5 2.5H9V9.5H2.5Z" fill="#fff" /></Svg>
    <Svg w={17} h={17} className="mr-[21px]"><path d="M1 16Q2 2 16 1" stroke="#aaa" strokeWidth="1.2" /><path d="M4.5 16Q5 6 16 5M8 16Q8.5 10 16 9" stroke="#fff" strokeWidth="1.3" /><circle cx="14" cy="14.5" r="2" fill="#fff" /></Svg>
    <Svg w={21} h={17} className="mr-[19px]"><path d="M1 6H4L8 2V15L4 11H1Z" stroke="#fff" strokeWidth="1.3" /><path d="M10.5 6Q12.5 8.5 10.5 11M13 4Q16.5 8.5 13 13" stroke="#fff" strokeWidth="1.2" /><path d="M16 2Q21 8.5 16 15" stroke="#bbb" strokeWidth="1.2" /></Svg>
    <Svg w={21} h={20} className="mr-[21px]"><path d="M8 13 14 1.5Q16.5 0 17 2.5L10.5 14.5 7.5 16ZM9 9Q1 10.5 1 15T5 19 8 14M12 11Q18 7.5 19 10.5T13 13" stroke="#fff" strokeWidth="1.4" /></Svg>
    <span className="w-[54px] pt-[2px] tracking-[-0.4px]">0:35</span>
    <Svg w={21} h={20}><path d="M.7.7H20.3V16.3H13L10.5 19 8 16.3H.7Z" stroke="#fff" strokeWidth="1.4" /></Svg>
    <div className="ml-auto mr-[7px] h-full w-[1px] bg-[#b9a6b0]" />
  </div>
);

export default function App() {
  return (
    <div className={`flex h-[1080px] w-[1920px] flex-col overflow-hidden bg-[#141414] text-[15px] leading-[18px] ${UI}`}>
      <TitleBar />
      <MenuBar />
      <Toolbar />
      <div className="flex h-[923px]">
        <div className="flex w-[1573px] flex-col">
          <div className="mb-[2px] flex h-[584px]">
            <Hierarchy />
            <GameView />
          </div>
          <Project />
        </div>
        <Inspector />
      </div>
      <StatusBar />
      <Taskbar />
    </div>
  );
}
